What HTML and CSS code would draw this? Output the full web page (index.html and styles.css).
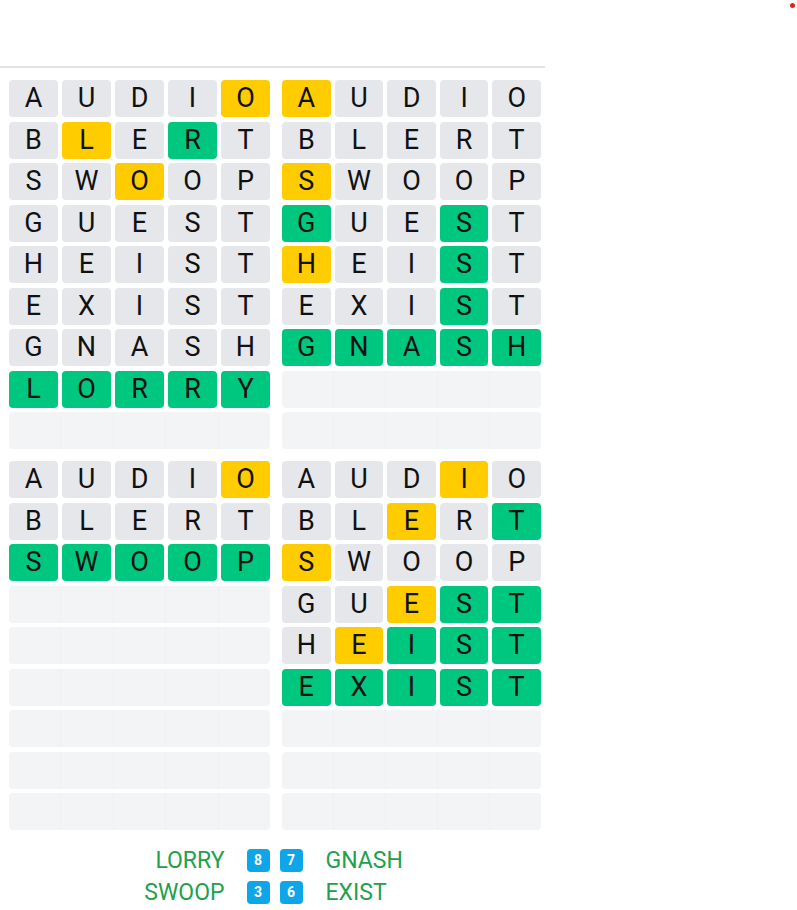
FILE: index.html
```html
<!DOCTYPE html>
<html lang="en">
<head>
    <meta charset="UTF-8">
    <meta name="viewport" content="width=device-width, initial-scale=1.0">
    <title>Quordle</title>
    <link rel="stylesheet" href="styles.css">
</head>
<body>
    <span class="dot"></span>
    <div class="game">
        <div class="header"></div>

        <div class="boards">
            <!-- board 1 -->
            <div class="board">
                <div class="row"><span class="cell">A</span><span class="cell">U</span><span class="cell">D</span><span class="cell">I</span><span class="cell y">O</span></div>
                <div class="row"><span class="cell">B</span><span class="cell y">L</span><span class="cell">E</span><span class="cell g">R</span><span class="cell">T</span></div>
                <div class="row"><span class="cell">S</span><span class="cell">W</span><span class="cell y">O</span><span class="cell">O</span><span class="cell">P</span></div>
                <div class="row"><span class="cell">G</span><span class="cell">U</span><span class="cell">E</span><span class="cell">S</span><span class="cell">T</span></div>
                <div class="row"><span class="cell">H</span><span class="cell">E</span><span class="cell">I</span><span class="cell">S</span><span class="cell">T</span></div>
                <div class="row"><span class="cell">E</span><span class="cell">X</span><span class="cell">I</span><span class="cell">S</span><span class="cell">T</span></div>
                <div class="row"><span class="cell">G</span><span class="cell">N</span><span class="cell">A</span><span class="cell">S</span><span class="cell">H</span></div>
                <div class="row"><span class="cell g">L</span><span class="cell g">O</span><span class="cell g">R</span><span class="cell g">R</span><span class="cell g">Y</span></div>
                <div class="row empty"><span></span><span></span><span></span><span></span><span></span></div>
            </div>

            <!-- board 2 -->
            <div class="board">
                <div class="row"><span class="cell y">A</span><span class="cell">U</span><span class="cell">D</span><span class="cell">I</span><span class="cell">O</span></div>
                <div class="row"><span class="cell">B</span><span class="cell">L</span><span class="cell">E</span><span class="cell">R</span><span class="cell">T</span></div>
                <div class="row"><span class="cell y">S</span><span class="cell">W</span><span class="cell">O</span><span class="cell">O</span><span class="cell">P</span></div>
                <div class="row"><span class="cell g">G</span><span class="cell">U</span><span class="cell">E</span><span class="cell g">S</span><span class="cell">T</span></div>
                <div class="row"><span class="cell y">H</span><span class="cell">E</span><span class="cell">I</span><span class="cell g">S</span><span class="cell">T</span></div>
                <div class="row"><span class="cell">E</span><span class="cell">X</span><span class="cell">I</span><span class="cell g">S</span><span class="cell">T</span></div>
                <div class="row"><span class="cell g">G</span><span class="cell g">N</span><span class="cell g">A</span><span class="cell g">S</span><span class="cell g">H</span></div>
                <div class="row empty"><span></span><span></span><span></span><span></span><span></span></div>
                <div class="row empty"><span></span><span></span><span></span><span></span><span></span></div>
            </div>

            <!-- board 3 -->
            <div class="board">
                <div class="row"><span class="cell">A</span><span class="cell">U</span><span class="cell">D</span><span class="cell">I</span><span class="cell y">O</span></div>
                <div class="row"><span class="cell">B</span><span class="cell">L</span><span class="cell">E</span><span class="cell">R</span><span class="cell">T</span></div>
                <div class="row"><span class="cell g">S</span><span class="cell g">W</span><span class="cell g">O</span><span class="cell g">O</span><span class="cell g">P</span></div>
                <div class="row empty"><span></span><span></span><span></span><span></span><span></span></div>
                <div class="row empty"><span></span><span></span><span></span><span></span><span></span></div>
                <div class="row empty"><span></span><span></span><span></span><span></span><span></span></div>
                <div class="row empty"><span></span><span></span><span></span><span></span><span></span></div>
                <div class="row empty"><span></span><span></span><span></span><span></span><span></span></div>
                <div class="row empty"><span></span><span></span><span></span><span></span><span></span></div>
            </div>

            <!-- board 4 -->
            <div class="board">
                <div class="row"><span class="cell">A</span><span class="cell">U</span><span class="cell">D</span><span class="cell y">I</span><span class="cell">O</span></div>
                <div class="row"><span class="cell">B</span><span class="cell">L</span><span class="cell y">E</span><span class="cell">R</span><span class="cell g">T</span></div>
                <div class="row"><span class="cell y">S</span><span class="cell">W</span><span class="cell">O</span><span class="cell">O</span><span class="cell">P</span></div>
                <div class="row"><span class="cell">G</span><span class="cell">U</span><span class="cell y">E</span><span class="cell g">S</span><span class="cell g">T</span></div>
                <div class="row"><span class="cell">H</span><span class="cell y">E</span><span class="cell g">I</span><span class="cell g">S</span><span class="cell g">T</span></div>
                <div class="row"><span class="cell g">E</span><span class="cell g">X</span><span class="cell g">I</span><span class="cell g">S</span><span class="cell g">T</span></div>
                <div class="row empty"><span></span><span></span><span></span><span></span><span></span></div>
                <div class="row empty"><span></span><span></span><span></span><span></span><span></span></div>
                <div class="row empty"><span></span><span></span><span></span><span></span><span></span></div>
            </div>
        </div>

        <div class="summary">
            <span class="word left">LORRY</span>
            <span class="badge">8</span>
            <span class="badge">7</span>
            <span class="word right">GNASH</span>

            <span class="word left">SWOOP</span>
            <span class="badge">3</span>
            <span class="badge">6</span>
            <span class="word right">EXIST</span>
        </div>
    </div>
</body>
</html>
```

FILE: styles.css
```css
body {
    margin: 0;
    font-family: Roboto, "Liberation Sans", Arial, sans-serif;
    background: #fff;
    color: #111;
}
.dot {
    position: absolute;
    top: 3px;
    left: 790px;
    width: 5px;
    height: 5px;
    border-radius: 50%;
    background: #e02424;
}
.game {
    width: 545px;
}
.header {
    height: 66px;
    border-bottom: 2px solid #e3e3e3;
}
.boards {
    display: grid;
    grid-template-columns: 261px 259px;
    column-gap: 12px;
    row-gap: 12px;
    padding: 12px 0 0 9px;
}
.board {
    display: flex;
    flex-direction: column;
    gap: 4.5px;
}
.row {
    display: flex;
    gap: 4px;
    height: 37px;
}
.cell {
    flex: 1;
    display: flex;
    align-items: center;
    justify-content: center;
    background: #e5e7eb;
    border-radius: 4px;
    font-size: 27px;
    line-height: 1;
}
.cell.y {
    background: #ffcc00;
}
.cell.g {
    background: #00c77f;
}
.row.empty {
    gap: 0;
    background: #f3f4f6;
    border-radius: 4px;
}
.row.empty span {
    flex: 1;
    border-right: 1px solid #eef0f2;
}
.row.empty span:last-child {
    border-right: none;
}
.summary {
    display: grid;
    grid-template-columns: 1fr 23px 23px 1fr;
    column-gap: 10px;
    row-gap: 9px;
    align-items: center;
    padding: 19px 0 0 4px;
}
.word {
    color: #22a04c;
    font-size: 23px;
    line-height: 23px;
}
.word.left {
    text-align: right;
    padding-right: 12px;
}
.word.right {
    padding-left: 13px;
}
.badge {
    height: 23px;
    border-radius: 4px;
    background: #0ea5e9;
    color: #fff;
    font-size: 14px;
    font-weight: bold;
    line-height: 23px;
    text-align: center;
}
```
